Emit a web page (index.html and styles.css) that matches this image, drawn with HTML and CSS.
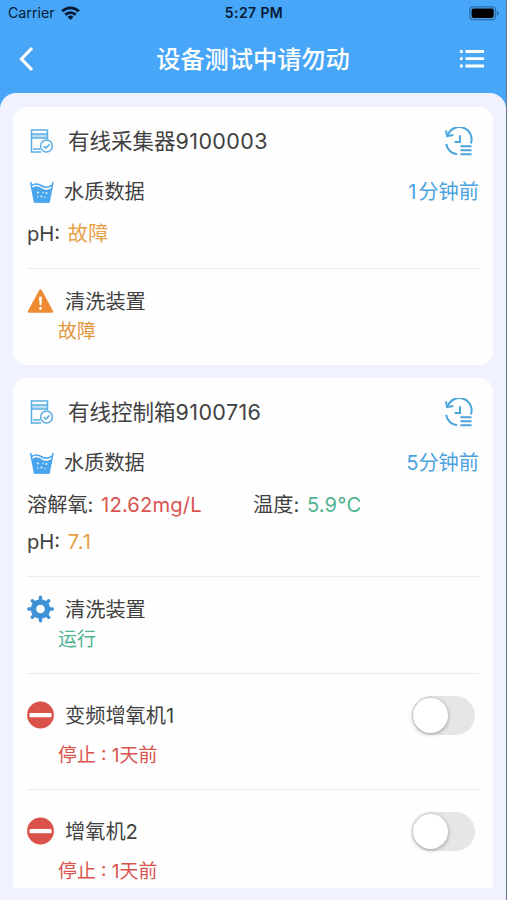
FILE: index.html
```html
<!DOCTYPE html>
<html lang="zh-CN">
<head>
<meta charset="utf-8">
<meta name="viewport" content="width=device-width, initial-scale=1">
<title>设备</title>
<link rel="stylesheet" href="styles.css">
</head>
<body>
<svg class="sprite" aria-hidden="true">
  <symbol id="device" viewBox="0 0 24 26">
    <path d="M2 6.500h15v3H2z" fill="currentColor" opacity=".4" />
    <g fill="none" stroke="currentColor" stroke-width="1.500">
      <path d="M17.500 11V2H1.500v22h9.500M1.500 6h16M1.500 10h16M3 21h7" />
      <circle cx="16.500" cy="18" r="5.900" />
      <path d="M13.700 18l2.100 2.100 3.700-3.700" />
    </g>
  </symbol>
  <symbol id="water" viewBox="0 0 26 24">
    <path d="M1.600 2l3.900 20h14.600l3.900-20" fill="none" stroke="currentColor" stroke-width="1.500" />
    <path d="M3 8C7 5 10 6.500 13 8.500s6.500 1.500 9.800-.5L20 22.500H5.500z" fill="currentColor" />
    <path d="M2.500 5.500C7 2.500 10 4 13 6s6.500 1.500 10-.8" fill="none" stroke="currentColor" stroke-width="1.600" />
    <g fill="#d9efff"><circle cx="9" cy="12.500" r="1.100" /><circle cx="14" cy="12.500" r=".8" /><circle cx="17.500" cy="13" r="1" /><circle cx="12.500" cy="16.500" r="1.100" /><circle cx="8.800" cy="17" r=".7" /><circle cx="16" cy="17.500" r=".7" /></g>
  </symbol>
  <symbol id="history" viewBox="0 0 30 30">
    <g fill="none" stroke="currentColor" stroke-width="2.100">
      <path d="M4 8.500A12.500 12.500 0 0 1 27.800 17M2.300 17.500A12.500 12.500 0 0 0 13.500 28.300" />
      <path d="M2 3.500L3.200 9.500l6.500-1.200M16.500 8.500v7H11" />
      <path d="M17 19.800h11.500M17 24h11.500M17 28.300h11.500" />
    </g>
  </symbol>
  <symbol id="stop" viewBox="0 0 28 28">
    <circle cx="14" cy="14" r="13.900" fill="#d9534a" />
    <rect x="2.600" y="11.800" width="22.800" height="4.600" rx="1" fill="#fff" />
  </symbol>
</svg>

<div class="app">
  <header class="top">
    <div class="status-bar">
      <div class="carrier">
        <span>Carrier</span>
        <svg width="19" height="14" viewBox="0 0 19 14"><g fill="none" stroke="#061a33" stroke-width="2.800"><path d="M1.200 5.200a11.800 11.800 0 0 1 16.600 0M4.300 8.700a7.400 7.400 0 0 1 10.400 0" /></g><path d="M6.600 11a4.100 4.100 0 0 1 5.800 0L9.500 13.900z" fill="#061a33" /></svg>
      </div>
      <div class="clock">5:27 PM</div>
      <svg class="battery" width="31" height="15" viewBox="0 0 31 15"><rect x=".8" y=".8" width="25.800" height="12.900" rx="3.500" fill="none" stroke="#2c6da8" stroke-width="1.200" /><rect x="2.600" y="2.600" width="22.200" height="9.300" rx="1.800" fill="#000" /><path d="M28 5v4.500q1.700-.6 1.700-2.250T28 5z" fill="#2c6da8" /></svg>
    </div>
    <div class="nav">
      <svg width="18" height="26" viewBox="0 0 18 26"><path d="M15 2L4.500 13 15 24" fill="none" stroke="#fff" stroke-width="3.200" /></svg>
      <h1>设备测试中请勿动</h1>
      <svg width="26" height="20" viewBox="0 0 26 20"><g stroke="#fff" stroke-width="2.800"><path d="M6.500 2.500H25M6.500 9.700H25M6.500 17H25" /><path d="M1 2.500h2.700M1 9.700h2.700M1 17h2.700" /></g></svg>
    </div>
  </header>

  <main class="sheet">
    <div class="list">
      <section class="card">
        <div class="card-head"><svg class="i-device"><use href="#device" /></svg><h2>有线采集器<span>9100003</span></h2><svg class="i-history"><use href="#history" /></svg></div>
        <div class="water"><svg class="i-water"><use href="#water" /></svg><span>水质数据</span><time><em>1</em>分钟前</time></div>
        <div class="metrics"><div>pH: <b class="warn">故障</b></div></div>
        <div class="unit">
          <div class="unit-row"><svg class="i-unit" viewBox="0 0 28 28"><path d="M14 3L26 25H2z" fill="#ee8b32" stroke="#ee8b32" stroke-width="2.400" stroke-linejoin="round" /><path d="M12.500 9.500h3l-.6 9h-1.800z" fill="#fff" /><circle cx="14" cy="21.700" r="1.500" fill="#fff" /></svg><span>清洗装置</span></div>
          <p class="warn">故障</p>
        </div>
      </section>

      <section class="card">
        <div class="card-head"><svg class="i-device"><use href="#device" /></svg><h2>有线控制箱<span>9100716</span></h2><svg class="i-history"><use href="#history" /></svg></div>
        <div class="water"><svg class="i-water"><use href="#water" /></svg><span>水质数据</span><time>5分钟前</time></div>
        <div class="metrics">
          <div>溶解氧: <b class="bad">12.62mg/L</b></div>
          <div>温度: <b class="good">5.9°C</b></div>
          <div>pH: <b class="warn ph">7.1</b></div>
        </div>
        <div class="unit">
          <div class="unit-row"><svg class="i-unit" viewBox="-14 -14 28 28"><g fill="none" stroke="#3f91d6"><circle r="7.300" stroke-width="5.600" /><path d="M0-9v-3.200M0 9v3.200M-9 0h-3.200M9 0h3.200M6.500-6.500l2-2M-6.500 6.500l-2 2M-6.500-6.500l-2-2M6.500 6.500l2 2" stroke-width="3.600" stroke-linecap="round" /></g></svg><span>清洗装置</span></div>
          <p class="good">运行</p>
        </div>
        <div class="unit switchable">
          <div class="unit-row"><svg class="i-unit"><use href="#stop" /></svg><span>变频增氧机1</span><i class="toggle"></i></div>
          <p class="bad">停止 : 1天前</p>
        </div>
        <div class="unit switchable">
          <div class="unit-row"><svg class="i-unit"><use href="#stop" /></svg><span>增氧机2</span><i class="toggle"></i></div>
          <p class="bad">停止 : 1天前</p>
        </div>
      </section>
    </div>
  </main>
</div>
</body>
</html>
```
FILE: styles.css
```css
* { box-sizing: border-box; }

body {
  margin: 0;
  color: #414141;
  font: 20.2px/1 Inter, "Noto Sans CJK SC", sans-serif;
}

h1, h2, p { margin: 0; }
b { font-weight: 400; }
em { font-style: normal; letter-spacing: 2px; }
svg { display: block; flex: none; }
.sprite { position: absolute; width: 0; height: 0; }

.app {
  display: flex;
  flex-direction: column;
  height: 900px;
  overflow: hidden;
  background: #48a6f8;
  border-right: 1px solid #66788f;
}

.top { flex: none; height: 93px; }

.status-bar {
  display: grid;
  grid-template-columns: 1fr auto 1fr;
  align-items: center;
  height: 25px;
  padding: 1px 6px 0 8px;
  color: #061a33;
  font-size: 14.2px;
}
.carrier { display: flex; align-items: center; gap: 6px; }
.clock { font-weight: 600; font-size: 14px; letter-spacing: .4px; }
.battery { justify-self: end; }

.nav {
  display: flex;
  align-items: center;
  height: 68px;
  padding: 0 21px 0 17px;
  color: #fff;
}
.nav h1 {
  flex: 1;
  padding: 2px 0 0 12px;
  font-size: 24.2px;
  font-weight: 500;
  line-height: 36px;
  text-align: center;
}

.sheet {
  flex: 1;
  min-height: 0;
  padding: 14px 13px 12px;
  background: #f0f3ff;
  border-radius: 16px 16px 0 0;
}

.list {
  display: flex;
  flex-direction: column;
  gap: 13px;
  height: 781px;
  overflow: hidden;
}

.card {
  flex: none;
  padding: 0 14px;
  background: #fefefe;
  border-radius: 14px;
}

.card-head { display: flex; align-items: center; height: 68px; padding: 0 6px 0 3px; }
.card-head h2 { flex: 1; margin-left: 14px; font-size: 21.5px; font-weight: 400; line-height: 32px; }
.card-head h2 span { letter-spacing: .4px; }
.i-device { width: 24px; height: 26px; color: #58ade4; }
.i-history { width: 29px; height: 29px; color: #4ba5dc; }

.water { display: flex; align-items: center; height: 33px; padding-left: 2px; line-height: 33px; }
.water span { flex: 1; margin-left: 9px; }
.water time { color: #4ba2df; }
.i-water { width: 26px; height: 24px; color: #49a5ee; }

.metrics {
  display: grid;
  grid-template-columns: 1fr 1fr;
  padding: 7px 0 16px;
  line-height: 37px;
}
.metrics b { margin-left: 2px; letter-spacing: .15px; }
.metrics .ph { letter-spacing: .9px; }

.unit { padding: 16px 0 19px; border-top: 1px solid #ececee; }
.unit-row { display: flex; align-items: center; height: 32px; line-height: 32px; }
.unit-row span { flex: 1; margin-left: 11px; padding-top: 1px; }
.unit p { margin-top: 1px; padding-left: 31px; font-size: 18.9px; line-height: 28px; }
.i-unit { width: 27px; height: 28px; }

.switchable { padding-top: 20px; }
.switchable .unit-row { height: 42px; }
.switchable p { margin-top: 6px; }

.toggle {
  width: 63px;
  height: 39px;
  margin-right: 4px;
  padding: 2px 1px;
  background: #e6e6e8;
  border-radius: 20px;
}
.toggle::before {
  content: "";
  display: block;
  width: 35px;
  height: 35px;
  background: #fff;
  border-radius: 50%;
  box-shadow: 0 1px 4px rgba(0, 0, 0, .35);
}

.warn { color: #e6a046; }
.bad { color: #d9534f; }
.good { color: #50b592; }
.unit .warn { color: #e3953c; }
```
